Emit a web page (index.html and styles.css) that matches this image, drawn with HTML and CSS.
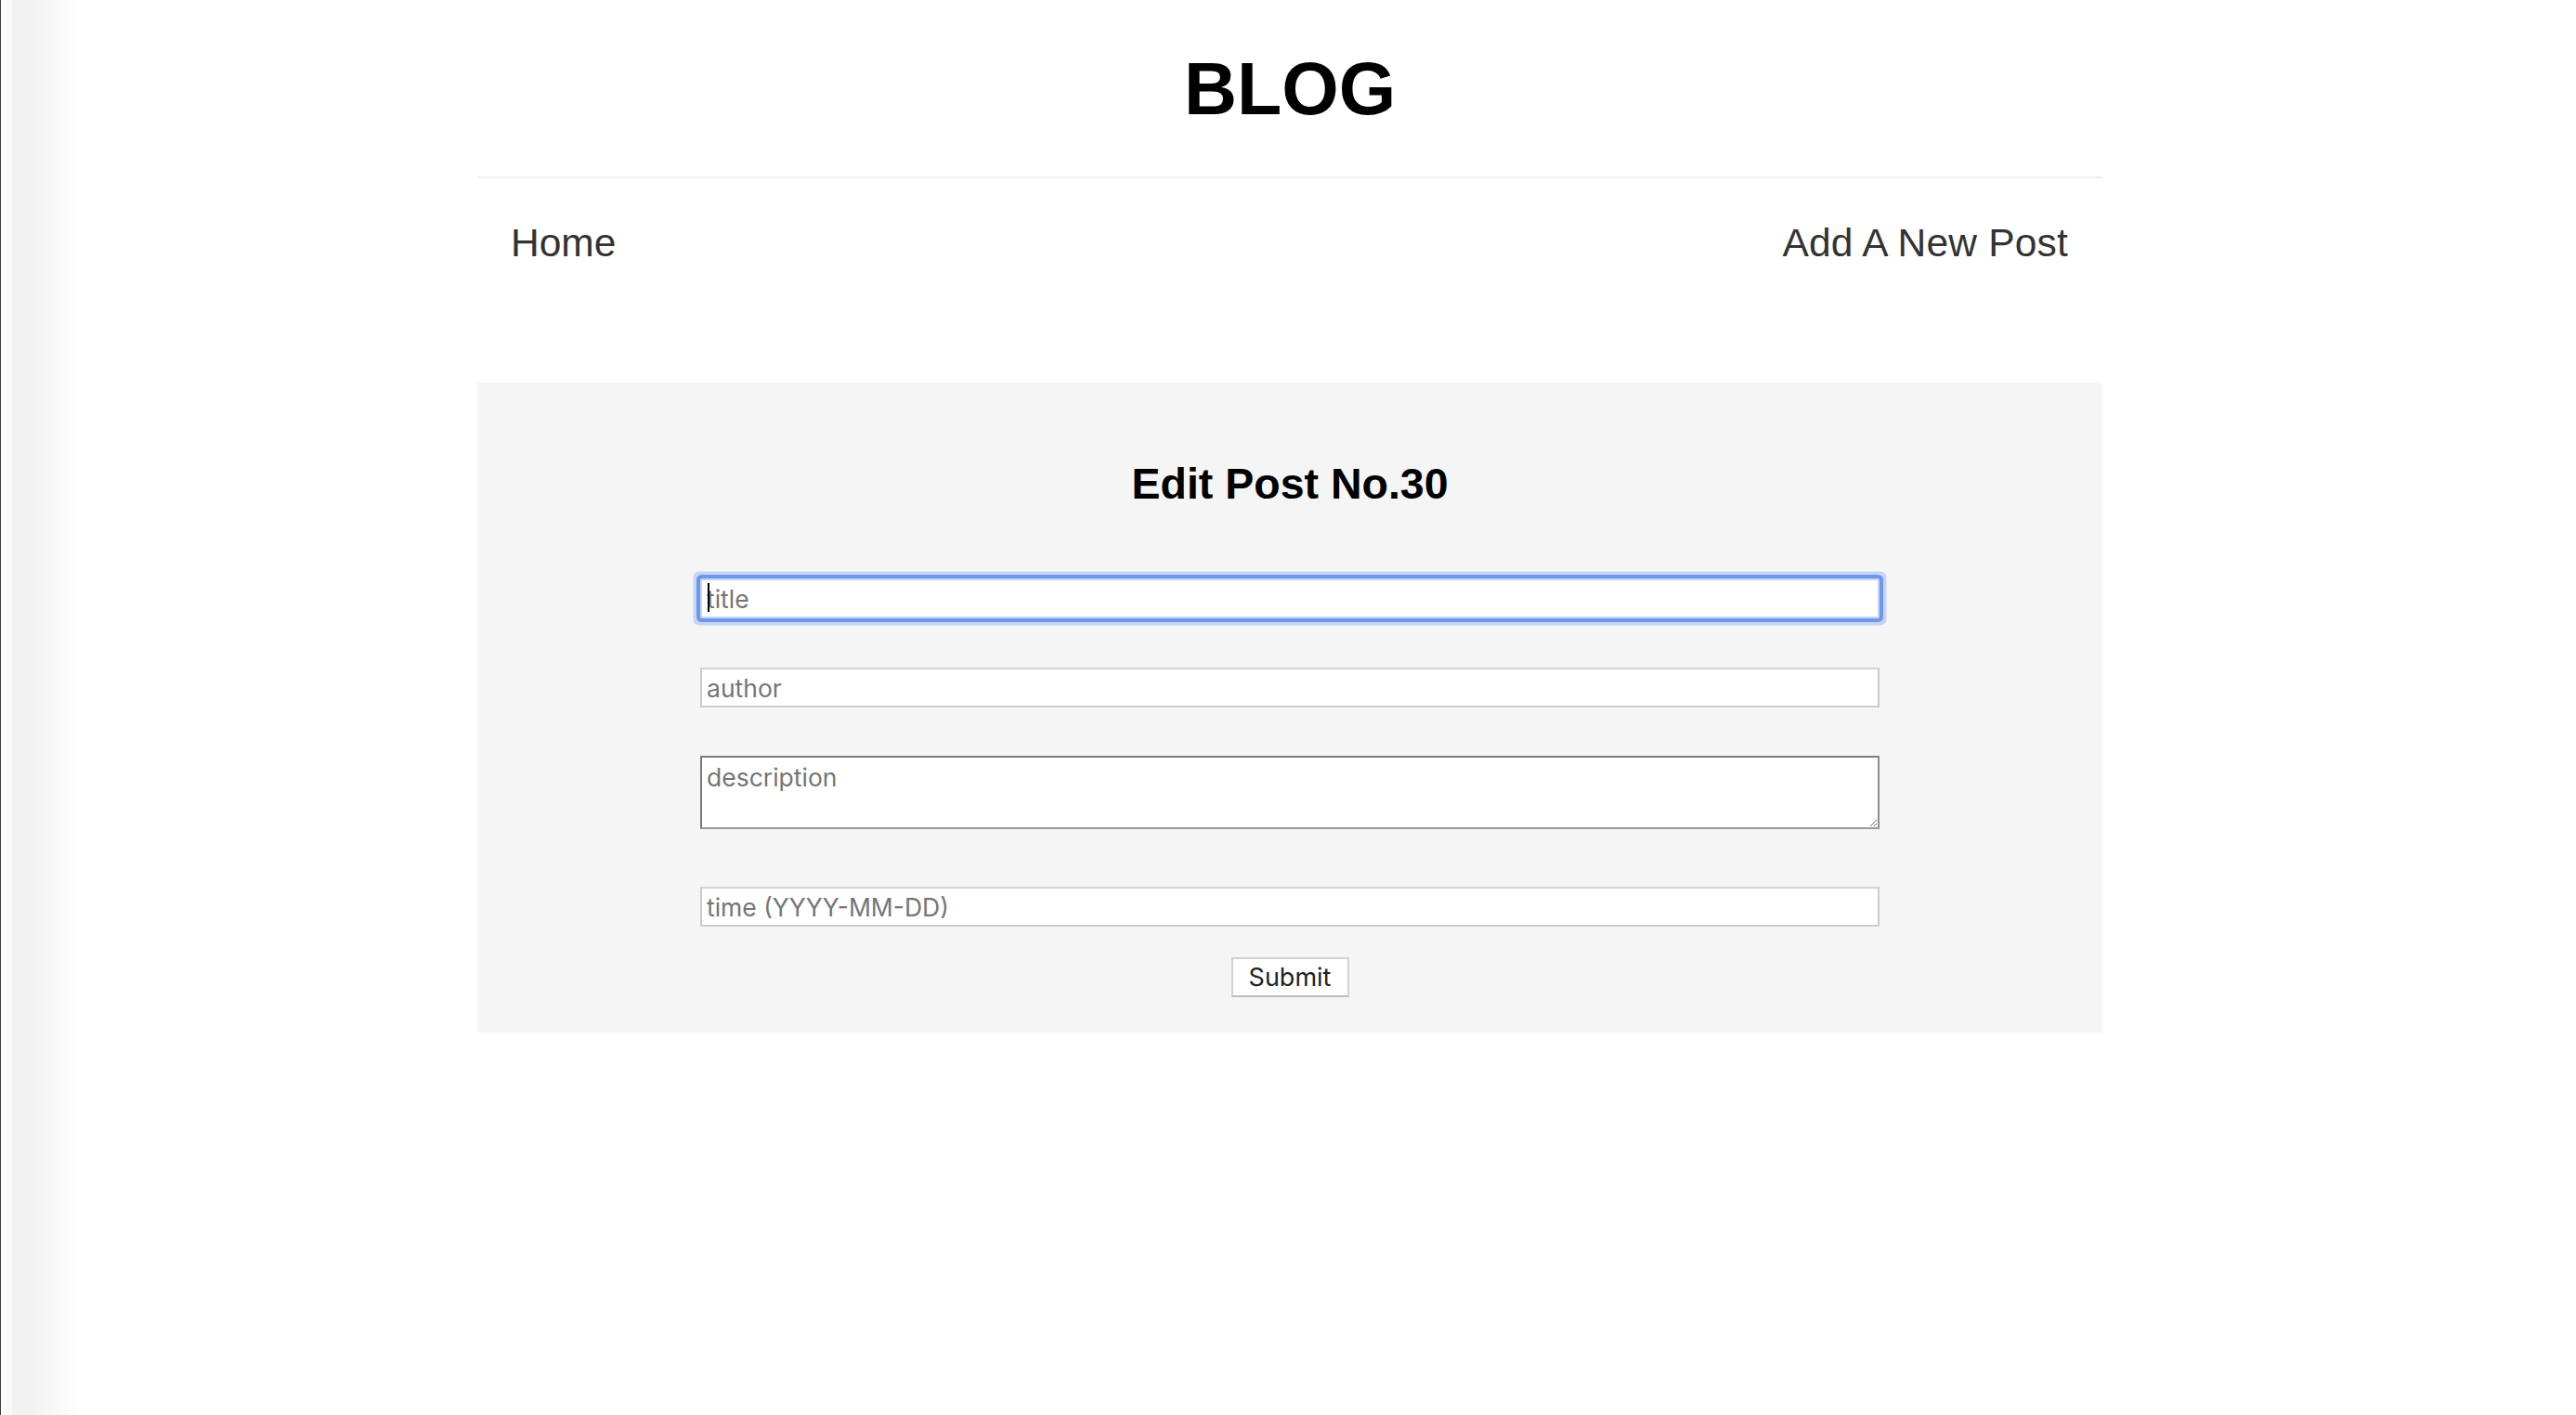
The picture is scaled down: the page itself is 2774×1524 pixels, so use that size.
FILE: index.html
```html
<!DOCTYPE html>
<html lang="en">
<head>
<meta charset="utf-8">
<title>BLOG - Edit Post</title>
<link rel="stylesheet" href="styles.css">
</head>
<body>
  <div class="page">
    <header class="site-header">
      <h1 class="site-title">BLOG</h1>
    </header>
    <nav class="site-nav">
      <a class="nav-link" href="#">Home</a>
      <a class="nav-link" href="#">Add A New Post</a>
    </nav>
    <main class="edit-panel">
      <h2 class="edit-title">Edit Post No.30</h2>
      <form class="edit-form">
        <div class="field field-title">
          <input class="text-input is-focused" type="text" placeholder="title">
          <span class="caret"></span>
        </div>
        <div class="field field-author">
          <input class="text-input" type="text" placeholder="author">
        </div>
        <div class="field field-desc">
          <textarea class="text-area" placeholder="description"></textarea>
        </div>
        <div class="field field-time">
          <input class="text-input" type="text" placeholder="time (YYYY-MM-DD)">
        </div>
        <button class="submit-btn" type="button">Submit</button>
      </form>
    </main>
  </div>
</body>
</html>
```

FILE: styles.css
```css
html, body {
  margin: 0;
  padding: 0;
}

body {
  min-height: 100vh;
  padding-left: 4px;
  box-sizing: border-box;
  font-family: "Liberation Sans", Arial, Helvetica, sans-serif;
  color: #000;
  background: linear-gradient(to right,
    #3c3c3c 0px, #3c3c3c 1px,
    #fafafa 1px, #f8f8f8 12px,
    #f2f2f2 14px, #f2f2f2 36px,
    #fdfdfd 78px, #ffffff 84px);
}

.page {
  width: 1750px;
  margin: 0 auto;
}

.site-header {
  padding-top: 56px;
  margin-bottom: 54px;
  text-align: center;
}

.site-title {
  margin: 0;
  font-size: 79px;
  line-height: 80px;
  font-weight: 700;
  color: #000;
}

.site-nav {
  display: flex;
  justify-content: space-between;
  border-top: 2px solid #efefef;
  padding: 45px 37px 45px 36px;
}

.nav-link {
  font-size: 42.5px;
  line-height: 50px;
  color: #333;
  text-decoration: none;
}

.nav-link + .nav-link {
  letter-spacing: 0.2px;
}

.edit-panel {
  margin-top: 80px;
  background: #f5f5f5;
  padding: 82px 0 38px 0;
  display: flex;
  flex-direction: column;
  align-items: center;
}

.edit-title {
  margin: 0 0 75px 0;
  font-size: 46.5px;
  line-height: 54px;
  font-weight: 700;
  color: #000;
}

.edit-form {
  display: flex;
  flex-direction: column;
  align-items: center;
  width: 1270px;
}

.field {
  position: relative;
  width: 100%;
  display: flex;
}

.field-title { margin-bottom: 53px; }
.field-author { margin-bottom: 52px; }
.field-desc { margin-bottom: 62px; }
.field-time { margin-bottom: 33px; }

.text-input {
  box-sizing: border-box;
  width: 100%;
  height: 43px;
  margin: 0;
  padding: 0 5px;
  border: 2px solid #cbcbcb;
  border-top-color: #d3d3d3;
  border-radius: 0;
  background: #fff;
  font-family: Inter, "Liberation Sans", Arial, sans-serif;
  font-size: 26.5px;
  color: #222;
  outline: none;
}

.text-input::placeholder,
.text-area::placeholder {
  color: #757575;
}

.text-input.is-focused {
  border-color: #c6d6f6;
  border-radius: 2px;
  box-shadow: 0 0 0 4px #6e97e9, 0 0 0 7.5px #c6d5f6;
}

.caret {
  position: absolute;
  left: 8px;
  top: 5px;
  width: 2px;
  height: 31px;
  background: #000;
}

.text-area {
  box-sizing: border-box;
  width: 100%;
  height: 79px;
  margin: 0;
  padding: 5px 5px;
  border: 2px solid #7c7c7c;
  border-bottom-color: #9a9a9a;
  border-right-color: #8e8e8e;
  border-radius: 0;
  background: #fff;
  font-family: Inter, "Liberation Sans", Arial, sans-serif;
  font-size: 26.5px;
  color: #222;
  outline: none;
  resize: vertical;
}

.submit-btn {
  box-sizing: border-box;
  height: 43px;
  width: 127px;
  margin: 0;
  padding: 0;
  border: 2px solid #d2d2d2;
  border-bottom-color: #bdbdbd;
  border-radius: 0;
  background: #fff;
  font-family: Inter, "Liberation Sans", Arial, sans-serif;
  font-size: 27px;
  color: #222;
  cursor: pointer;
}
```
